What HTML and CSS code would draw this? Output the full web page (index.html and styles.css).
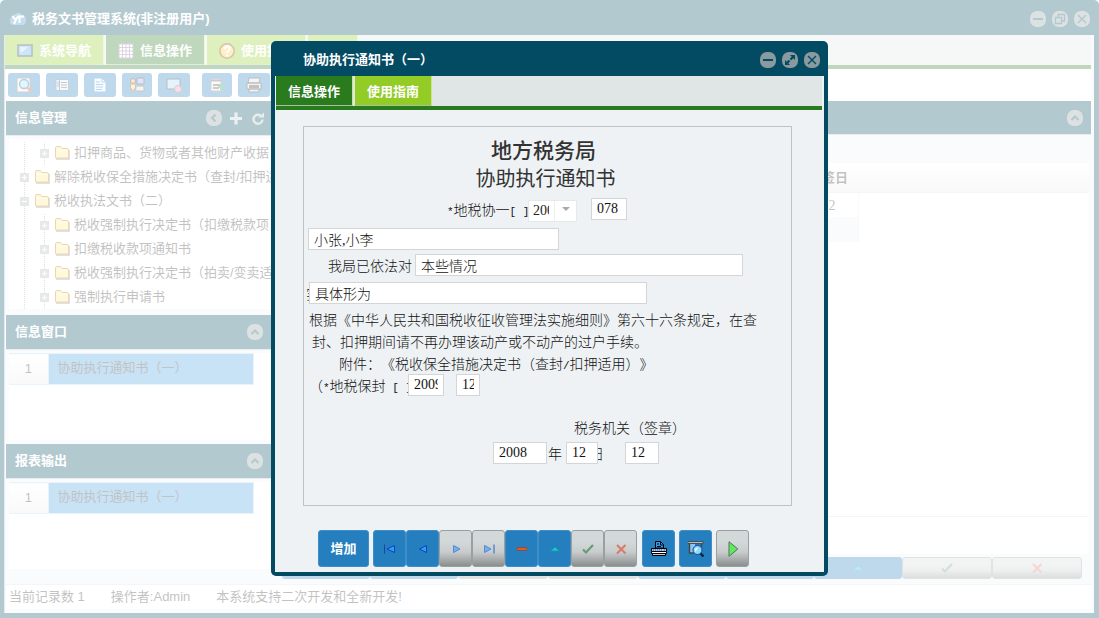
FILE: index.html
```html
<!DOCTYPE html>
<html lang="zh-CN">
<head>
<meta charset="utf-8">
<title>税务文书管理系统</title>
<link rel="stylesheet" href="styles.css">
</head>
<body>
<svg class="defs" aria-hidden="true">
  <symbol id="min" viewBox="0 0 16 16"><rect width="16" height="16" rx="7" fill="#8a9a9f"/><path d="M3 8h10" stroke="#034a63" stroke-width="2"/></symbol>
  <symbol id="restore" viewBox="0 0 16 16"><rect width="16" height="16" rx="7" fill="#8a9a9f"/><path d="M6 6V3.500h6.500V10H10M3.500 6.500H9.500V12.500H3.500z" fill="none" stroke="#034a63" stroke-width="1.300"/></symbol>
  <symbol id="max" viewBox="0 0 16 16"><rect width="16" height="16" rx="7" fill="#8a9a9f"/><path d="M8 3h5v5l-1.700-1.700-2 2-1.600-1.600 2-2zM8 13H3V8l1.700 1.700 2-2 1.600 1.600-2 2z" fill="#034a63"/></symbol>
  <symbol id="close" viewBox="0 0 16 16"><rect width="16" height="16" rx="7" fill="#8a9a9f"/><path d="M4 4l8 8M12 4l-8 8" stroke="#034a63" stroke-width="1.400"/></symbol>
  <symbol id="up" viewBox="0 0 16 16"><rect width="16" height="16" rx="7" fill="#8a9a9f"/><path d="M4.500 10L8 6.500 11.500 10" fill="none" stroke="#034a63" stroke-width="2"/></symbol>
  <symbol id="left" viewBox="0 0 16 16"><rect width="16" height="16" rx="7" fill="#8a9a9f"/><path d="M9.500 4.500L6 8l3.500 3.500" fill="none" stroke="#034a63" stroke-width="2"/></symbol>
  <symbol id="plus" viewBox="0 0 16 16"><path d="M8 2.500v12M2 8.500h12" stroke="#c3cbce" stroke-width="3.200"/></symbol>
  <symbol id="refresh" viewBox="0 0 16 16"><path d="M10.500 5.500A4.500 4.500 0 1 0 12.500 9.500" fill="none" stroke="#b6c0c3" stroke-width="2.400"/><path d="M8 7.500h6v-5z" fill="#b6c0c3"/></symbol>
  <symbol id="folder" viewBox="0 0 16 16"><path d="M2 14h13V5" fill="none" stroke="#777" stroke-width="1.500"/><path d="M1.500 13V3q0-1.500 1.500-1.500h3.500L8 3.500h5q1.500 0 1.500 1.500v8H2z" fill="#ffe680" stroke="#b87a10"/><path d="M2.500 5.500h11" stroke="#fff8d8"/></symbol>
  <symbol id="exp" viewBox="0 0 9 9"><rect width="9" height="9" fill="#acb5b7"/><path d="M2 4.500h5M4.500 2v5" stroke="#fff" stroke-width="1.200"/></symbol>
  <symbol id="col" viewBox="0 0 9 9"><rect width="9" height="9" fill="#acb5b7"/><path d="M2 4.500h5" stroke="#fff" stroke-width="1.200"/></symbol>
  <symbol id="first" viewBox="0 0 16 16"><path d="M2.500 3.500v9" stroke="#1545a8"/><path d="M12.500 4.500v7L5 8z" fill="#2e9dff" stroke="#0b46b5"/></symbol>
  <symbol id="prev" viewBox="0 0 16 16"><path d="M11.500 4.500v7L4.500 8z" fill="#2e9dff" stroke="#0b46b5"/></symbol>
  <symbol id="next" viewBox="0 0 16 16"><path d="M5.500 4.500v7L12 8z" fill="#71b1ef" stroke="#5689cf"/></symbol>
  <symbol id="last" viewBox="0 0 16 16"><path d="M3.500 4.500v7L10 8z" fill="#71b1ef" stroke="#5689cf"/><path d="M13 3.500v9" stroke="#5689cf" stroke-width="1.500"/></symbol>
  <symbol id="add" viewBox="0 0 16 16"><path d="M8 3v10M3 8h10" stroke="#15b84a" stroke-width="2.500"/></symbol>
  <symbol id="minus" viewBox="0 0 16 16"><rect x="3" y="6.500" width="10" height="3" fill="#c9260b"/><path d="M3.500 8h9" stroke="#ff941f"/></symbol>
  <symbol id="tri" viewBox="0 0 16 16"><path d="M3.500 10L8 6l4.500 4z" fill="#11d1de" stroke="#1495aa"/></symbol>
  <symbol id="check" viewBox="0 0 16 16"><path d="M3 8.500l3 3 7-7.500" fill="none" stroke="#659c78" stroke-width="2.200"/></symbol>
  <symbol id="cross" viewBox="0 0 16 16"><path d="M4 4l8.500 8.500M12.500 4L4 12.500" stroke="#d9796c" stroke-width="2"/></symbol>
</svg>

<div class="app">
  <header class="titlebar">
    <svg class="logo" viewBox="0 0 16 16"><path d="M3 14A4 4 0 0 1 1 7Q3 3 6 3q3-3 6 1 4 0 4 5 0 5-4 5z" fill="#3f8fc4"/><path d="M2.500 5l3 4 3-4M6 8.500L4 13M9.500 12V5.500H14" stroke="#fff" stroke-width="2" fill="none"/></svg>
    <h1>税务文书管理系统(非注册用户)</h1>
    <div class="winctl">
      <button aria-label="最小化"><svg><use href="#min"/></svg></button>
      <button aria-label="还原"><svg><use href="#restore"/></svg></button>
      <button aria-label="关闭"><svg><use href="#close"/></svg></button>
    </div>
  </header>
  <div class="client">
    <nav class="tabs main-tabs">
      <button><svg viewBox="0 0 16 16"><rect x="1" y="2" width="14" height="11" fill="#55a8e4" stroke="#10202f" stroke-width="1.400"/><path d="M3 4h8L4 10z" fill="#b9dfff"/></svg>系统导航</button>
      <button class="on"><svg viewBox="0 0 16 16"><rect x="1" y="1" width="14" height="14" fill="#fff"/><path d="M1 1h14v14H1zM4.500 1v14M8 1v14M11.500 1v14M1 4.500h14M1 8h14M1 11.500h14" fill="none" stroke="#8b6f9e"/></svg>信息操作</button>
      <button><svg viewBox="0 0 16 16"><circle cx="8" cy="8" r="7.200" fill="#ffc83a" stroke="#7d3000" stroke-width="1.500"/><path d="M5.500 6.500q0-3 2.700-3t2.500 2.300Q10.500 7.500 8 9v1M8 11.500v1.500" fill="none" stroke="#fff" stroke-width="2"/></svg>使用指南</button>
      <button class="stub" aria-label="更多"></button>
    </nav>
    <div class="toolbar">
      <button aria-label="查找"><svg viewBox="0 0 16 16"><path d="M1 1h13v14H1z" fill="#eee" stroke="#666"/><circle cx="8" cy="7" r="4.500" fill="#9be0ff" stroke="#1b5880" stroke-width="1.300"/><path d="M11 10l4 5" stroke="#d64a10" stroke-width="2.500"/></svg></button>
      <button aria-label="列表"><svg viewBox="0 0 16 16"><path d="M2 2.500h12.500v11H2z" fill="#dceaf3" stroke="#4f6676"/><path d="M5.500 3v10M7 5.500h6M7 8h6M7 10.500h6M3 5h2M3 7h2M3 9h2" stroke="#3a5a70"/></svg></button>
      <button aria-label="文档"><svg viewBox="0 0 16 16"><path d="M2 1h8l4 4v10H2z" fill="#e2f5ff" stroke="#1f7cc0"/><path d="M10 1v4h4M4 5h4M4 7.500h7M4 10h7M4 12.500h6" fill="none" stroke="#1f7cc0"/></svg></button>
      <button class="narrow" aria-label="用户"><svg viewBox="0 0 16 16"><path d="M8 1h7v6H8z" fill="#9aa0ff" stroke="#222"/><path d="M8 9h7v5H7" fill="#ddd" stroke="#444"/><circle cx="4" cy="4" r="2.500" fill="#f5b264" stroke="#3a2010"/><path d="M1.500 7h5v5H5v3H3v-3H1.500z" fill="#ffd178" stroke="#6d430b"/></svg></button>
      <button aria-label="屏幕"><svg viewBox="0 0 16 16"><path d="M1 2h13v10H1z" fill="#a5d5f5" stroke="#142a3a"/><circle cx="12" cy="12" r="3.500" fill="#e890de" stroke="#9b6010"/></svg></button>
      <button class="narrow apart" aria-label="新增记录"><svg viewBox="0 0 16 16"><path d="M2 2h10v12H2z" fill="#eee" stroke="#777"/><path d="M2 3.500h10M4 8h7M4 11h6" stroke="#555" stroke-width="2"/><path d="M12 7v6M9 10h6" stroke="#1da63c" stroke-width="2"/></svg></button>
      <button aria-label="打印"><svg viewBox="0 0 16 16"><path d="M3 1h11l-1 5H2zM1 6h14v6H1zM3 12h10v3H3z" fill="#ddd" stroke="#222"/><path d="M3 8h10v3H3z" fill="#333"/></svg></button>
    </div>
    <div class="workspace">
      <aside class="side">
        <section class="tree-panel">
          <header class="bar"><h2>信息管理</h2>
            <button aria-label="收起"><svg><use href="#left"/></svg></button>
            <button aria-label="添加"><svg><use href="#plus"/></svg></button>
            <button aria-label="刷新"><svg><use href="#refresh"/></svg></button>
          </header>
          <div class="pane">
            <ul class="tree">
              <li class="sub"><svg class="exp"><use href="#exp"/></svg><svg class="fold"><use href="#folder"/></svg>扣押商品、货物或者其他财产收据</li>
              <li><svg class="exp"><use href="#exp"/></svg><svg class="fold"><use href="#folder"/></svg>解除税收保全措施决定书（查封/扣押适用）</li>
              <li><svg class="exp"><use href="#col"/></svg><svg class="fold"><use href="#folder"/></svg>税收执法文书（二）</li>
              <li class="sub"><svg class="exp"><use href="#exp"/></svg><svg class="fold"><use href="#folder"/></svg>税收强制执行决定书（扣缴税款项</li>
              <li class="sub"><svg class="exp"><use href="#exp"/></svg><svg class="fold"><use href="#folder"/></svg>扣缴税收款项通知书</li>
              <li class="sub"><svg class="exp"><use href="#exp"/></svg><svg class="fold"><use href="#folder"/></svg>税收强制执行决定书（拍卖/变卖适</li>
              <li class="sub"><svg class="exp"><use href="#exp"/></svg><svg class="fold"><use href="#folder"/></svg>强制执行申请书</li>
            </ul>
          </div>
        </section>
        <section class="list-panel">
          <header class="bar"><h2>信息窗口</h2><button aria-label="折叠"><svg><use href="#up"/></svg></button></header>
          <div class="pane"><div class="sheet"><table class="list"><tr><th>1</th><td>协助执行通知书（一）</td></tr></table></div></div>
        </section>
        <section class="list-panel">
          <header class="bar"><h2>报表输出</h2><button aria-label="折叠"><svg><use href="#up"/></svg></button></header>
          <div class="pane"><div class="sheet"><table class="list"><tr><th>1</th><td>协助执行通知书（一）</td></tr></table></div></div>
        </section>
      </aside>
      <main class="content">
        <header class="bar"><h2></h2><button aria-label="折叠"><svg><use href="#up"/></svg></button></header>
        <div class="grid-wrap">
          <table class="grid">
            <thead><tr><th>签日</th><th></th></tr></thead>
            <tbody><tr><td>12</td><td></td></tr><tr class="alt"><td></td><td></td></tr></tbody>
          </table>
          <div class="grid-foot"></div>
        </div>
        <div class="pager">
          <button aria-label="首条"><svg><use href="#first"/></svg></button>
          <button aria-label="上一条"><svg><use href="#prev"/></svg></button>
          <button class="off" aria-label="下一条"><svg><use href="#next"/></svg></button>
          <button class="off" aria-label="末条"><svg><use href="#last"/></svg></button>
          <button aria-label="添加"><svg><use href="#add"/></svg></button>
          <button aria-label="删除"><svg><use href="#minus"/></svg></button>
          <button aria-label="编辑"><svg><use href="#tri"/></svg></button>
          <button class="off" aria-label="保存"><svg><use href="#check"/></svg></button>
          <button class="off" aria-label="取消"><svg><use href="#cross"/></svg></button>
        </div>
      </main>
    </div>
    <footer class="status"><span>当前记录数 1</span><span>操作者:Admin</span><span>本系统支持二次开发和全新开发!</span></footer>
  </div>
</div>

<div class="veil"></div>

<section class="dialog" role="dialog" aria-labelledby="dlg-title">
  <header class="dlg-head">
    <h2 id="dlg-title">协助执行通知书（一）</h2>
    <div class="winctl">
      <button aria-label="最小化"><svg><use href="#min"/></svg></button>
      <button aria-label="最大化"><svg><use href="#max"/></svg></button>
      <button aria-label="关闭"><svg><use href="#close"/></svg></button>
    </div>
  </header>
  <div class="dlg-body">
    <nav class="tabs dlg-tabs"><button class="on">信息操作</button><button>使用指南</button></nav>
    <form class="doc">
      <h3>地方税务局</h3>
      <h4>协助执行通知书</h4>
      <div class="row number">
        <label class="cut" for="year"><i>*</i>地税协一<i>[&nbsp;]</i></label>
        <span class="combo"><select id="year"><option>2008</option></select></span>
        <input class="w36" aria-label="编号" value="078">
      </div>
      <div class="row who"><input aria-label="收件人" value="小张,小李"></div>
      <div class="row case"><label for="case">我局已依法对</label><input id="case" value="本些情况"></div>
      <div class="row act"><label class="cut" for="act">实</label><input id="act" value="具体形为"></div>
      <div class="law">
        <p>根据《中华人民共和国税收征收管理法实施细则》第六十六条规定，在查</p>
        <p class="l2">封、扣押期间请不再办理该动产或不动产的过户手续。</p>
        <p class="l3">附件：《税收保全措施决定书（查封<i>/</i>扣押适用）》</p>
      </div>
      <div class="row seal-no"><label class="cut" for="sy">（<i>*</i>地税保封<i>&nbsp;[&nbsp;]</i></label><input id="sy" class="w36" value="2009"><input class="w24" aria-label="保封编号" value="12"></div>
      <p class="sign">税务机关（签章）</p>
      <div class="row date"><input id="dy" class="w54" value="2008"><label for="dy">年</label><input id="dm" class="w32" value="12"><label class="cut" for="dm">日</label><input class="w34" aria-label="日期" value="12"></div>
    </form>
    <div class="actions">
      <button class="text">增加</button>
      <div class="group">
        <button aria-label="首条"><svg><use href="#first"/></svg></button><button aria-label="上一条"><svg><use href="#prev"/></svg></button><button class="off" aria-label="下一条"><svg><use href="#next"/></svg></button><button class="off" aria-label="末条"><svg><use href="#last"/></svg></button><button aria-label="删除"><svg><use href="#minus"/></svg></button><button aria-label="编辑"><svg><use href="#tri"/></svg></button><button class="off" aria-label="保存"><svg><use href="#check"/></svg></button><button class="off" aria-label="取消"><svg><use href="#cross"/></svg></button>
      </div>
      <button aria-label="打印"><svg viewBox="0 0 16 16"><path d="M4.500 7V.500h5l3 3V7z" fill="#3b9be8" stroke="#000"/><path d="M9.500 1v3h3M6 3h2M6 5.500h4" fill="none" stroke="#000"/><path d="M.500 7.500h15v3H.500z" fill="#9bc8f0" stroke="#000"/><path d="M2 9h10" stroke="#2f5fb5" stroke-dasharray="1 1"/><path d="M13 9h1" stroke="#e22"/><path d="M.500 10.500h15v2H.500z" fill="#fff" stroke="#000"/><path d="M1.500 12.500h13v2h-13z" fill="#ccc" stroke="#000"/></svg></button>
      <button aria-label="预览"><svg viewBox="0 0 16 16"><path d="M0 .500h15v2H0z" fill="#bbb" stroke="#333" stroke-width=".700"/><path d="M2 3v9h5V3z" fill="#8cc6f2"/><path d="M1.500 3v9H6M13.500 3v3" fill="none" stroke="#444" stroke-width="1.400"/><circle cx="9.500" cy="9" r="4.500" fill="#8fd8ff" stroke="#114c86"/><path d="M7 9q0-2.500 3-2.500L7.500 11z" fill="#fff"/><path d="M12.500 12.500l3 3" stroke="#08243f" stroke-width="2.400"/></svg></button>
      <button class="off" aria-label="运行"><svg viewBox="0 0 16 16"><path d="M4 .700v14.600L12.800 8z" fill="#5eea5e" stroke="#56705a"/></svg></button>
    </div>
  </div>
</section>
</body>
</html>
```
FILE: styles.css
```css
* { box-sizing: border-box; }
body {
  margin: 0;
  font: 13px/20px "Liberation Sans", "Noto Sans CJK SC", sans-serif;
  color: #333;
  background: #fff;
  text-spacing-trim: space-all;
  position: relative;
  overflow: hidden;
}
h1, h2, h3, h4, p, ul { margin: 0; padding: 0; font-size: 13px; }
button { border: 0; padding: 0; background: none; font: inherit; display: flex; align-items: center; justify-content: center; }
svg { display: block; width: 16px; height: 16px; flex: none; }
.defs { position: absolute; width: 0; height: 0; }
.winctl { display: flex; gap: 6px; margin-left: auto; }

/* main window */
.app { min-height: 100vh; display: flex; flex-direction: column; background: #034a63; border-radius: 5px 5px 0 0; padding: 0 5px 5px 4px; }
.titlebar { height: 35px; display: flex; align-items: center; color: #fff; padding: 2px 4px 0 6px; }
.titlebar h1 { margin-left: 6px; }
.client { flex: 1; display: flex; flex-direction: column; background: #eef2f4; padding: 0 3px 4px 1px; border-left: 1px solid #a8bdc5; }
.tabs { display: flex; background: #e0e5e5; border-bottom: 4px solid #2a7a1e; gap: 2px; }
.tabs button { height: 30px; padding-top: 2px; background: #92cc25; color: #fff; font-weight: bold; border-right: 1px solid #c9e58e; border-bottom: 1px solid #a5c2a0; }
.tabs .on { background: #2a7a1e; }
.main-tabs { margin-left: -1px; }
.main-tabs button { width: 99px; gap: 6px; }
.main-tabs .stub { width: 50px; }
.toolbar { display: flex; gap: 6px; height: 32px; background: #fff; align-items: center; padding: 0 2px; }
.toolbar button { width: 32px; height: 24px; border-radius: 3px; background: #257fbf; }
.toolbar .narrow { width: 30px; }
.toolbar .apart { margin-left: 6px; }
.workspace { flex: 1; display: flex; gap: 3px; }
.side { width: 268px; display: flex; flex-direction: column; }
.side section { display: flex; flex-direction: column; }
.bar { height: 35px; display: flex; align-items: center; gap: 6px; background: #034a63; color: #fff; padding: 0 8px 0 9px; border-bottom: 1px solid #b5c4c8; }
.bar h2 { margin-right: auto; }
.side .bar { padding-right: 11px; }
.tree-panel .bar { padding-right: 8px; }
.pane { padding: 3px 3px 4px; }
.tree-panel .pane { padding-bottom: 6px; }
.tree { background: #fff; list-style: none; overflow: hidden; padding: 2px 0 0 6px; }
.tree li { display: flex; align-items: center; height: 24px; white-space: nowrap; gap: 4px; padding-left: 5px; background: repeating-linear-gradient(#fff 0 1px, #999 1px 2px) 9px 0 / 1px 100% no-repeat; }
.tree .sub { padding-left: 25px; background: repeating-linear-gradient(#fff 0 1px, #999 1px 2px) 9px 0 / 1px 100% no-repeat, repeating-linear-gradient(#fff 0 1px, #999 1px 2px) 29px 0 / 1px 100% no-repeat; }
.exp { width: 9px; height: 9px; margin-right: 1px; }
.list-panel { height: 129px; }
.list-panel .pane { flex: 1; }
.list-panel .sheet { height: 100%; background: #fff; }
.list { width: 245px; border-collapse: collapse; }
.list th, .list td { height: 31px; padding: 0; border: 1px solid #b5d8f2; border-left: 0; }
.list th { width: 39px; font-weight: normal; background: linear-gradient(#fff, #eaeaea); }
.list td { background: #479fdf; padding-left: 9px; padding-bottom: 3px; }
.content { flex: 1; display: flex; flex-direction: column; }
.content .bar { height: 34px; }
.grid-wrap { flex: 1; margin: 28px 2px 0 4px; background: #fff; display: flex; flex-direction: column; }
.grid { width: 100%; border-collapse: collapse; }
.grid th { height: 29px; padding: 2px 10px 0 0; text-align: right; background: linear-gradient(#fff, #e8e8e8); border-bottom: 1px solid #ddd; }
.grid th:first-child { width: 577px; }
.grid td { height: 25px; padding: 2px 22px 0 0; text-align: right; font-family: "Liberation Serif", serif; font-size: 14px; }
.grid td:first-child { border-right: 1px solid #eee; }
.grid .alt td:first-child { background: #eef2f4; }
.grid-foot { margin-top: auto; height: 38px; border-top: 1px solid #ddd; }
.pager { display: flex; padding: 3px 9px 5px 5px; }
.pager button { flex: 1; height: 22px; border-radius: 3px; background: #257fbf; }
.status { height: 25px; background: #fff; border-top: 1px solid #ddd; display: flex; align-items: center; gap: 26px; padding-left: 3px; }
.pager .off, .actions .off { background: linear-gradient(#d3d8d8 30%, #c8cccc 60%, #8b8e8e); border: 1px solid #9aa0a0; }
.veil { position: absolute; inset: 0; background: rgba(255, 255, 255, .7); }

/* dialog window */
.dialog { position: absolute; left: 271px; top: 41px; width: 557px; background: #034a63; border-radius: 5px; padding: 0 4px 4px; }
.dlg-head { height: 35px; display: flex; align-items: center; color: #fff; padding: 2px 4px 0 28px; }
.dlg-body { background: #eef2f4; padding: 0 2px 5px 1px; }
.dlg-tabs button { width: 77px; }
.doc { margin: 16px 30px 0 27px; border: 1px solid #bbc3c4; padding: 8px 0 41px; font: 300 14px/22px "Noto Sans CJK SC", sans-serif; color: #111; }
.doc h3 { font-size: 21px; line-height: 28px; font-weight: 500; color: #333; text-align: center; padding-right: 8px; }
.doc h4 { font-size: 20px; line-height: 30px; font-weight: 400; color: #333; text-align: center; padding-right: 4px; }
.doc p { font-size: 14px; white-space: nowrap; }
.doc i { font: 11px/11px "Liberation Mono", monospace; }
.row { display: flex; height: 22px; white-space: nowrap; }
.row input { height: 22px; border: 1px solid #d2d6d7; background: #fff; padding: 0 5px; font: 300 14px "Liberation Serif", "Noto Sans CJK SC", serif; color: #111; min-width: 0; border-radius: 0; }
.cut { overflow: hidden; flex: none; }
.row .w24 { width: 24px; }
.row .w32 { width: 32px; }
.row .w34 { width: 34px; }
.row .w36 { width: 36px; }
.row .w54 { width: 54px; }
.number { margin-top: 5px; padding-left: 143px; }
.number .cut { width: 81px; }
.combo { position: relative; width: 49px; margin-right: 14px; }
.combo select { appearance: none; width: 49px; height: 22px; border: 1px solid #e6e9ea; border-radius: 0; padding: 0 27px 0 4px; background: linear-gradient(90deg, #fff 25px, #eee 25px 26px, #fff 26px); font: 14px "Liberation Serif", serif; color: #222; overflow: hidden; }
.combo::after { content: ""; position: absolute; right: 7px; top: 9px; border: 4px solid transparent; border-top-color: #aaa; border-bottom: 0; }
.who { margin-top: 8px; padding-left: 4px; }
.who input { width: 251px; }
.case { margin-top: 4px; padding-left: 24px; gap: 3px; }
.case input { width: 328px; }
.act { margin-top: 6px; padding-left: 2px; }
.act .cut { width: 3px; }
.act input { width: 338px; }
.law { margin-top: 4px; padding-left: 5px; }
.law .l2 { padding-left: 3px; }
.law .l3 { padding-left: 30px; }
.seal-no { padding-left: 5px; }
.seal-no .cut { width: 99px; }
.seal-no .w24 { margin-left: 12px; }
.doc .sign { margin-top: 20px; padding-left: 270px; }
.date { margin-top: 4px; padding-left: 189px; }
.date label { margin: 0 4px 0 1px; }
.date .cut { width: 6px; display: flex; justify-content: flex-end; margin: 0 21px 0 0; }
.actions { display: flex; gap: 4px; margin-top: 24px; padding-left: 42px; }
.actions .group { display: flex; margin-right: 1px; }
.actions button { width: 33px; height: 37px; border-radius: 3px; background: #257fbf; border: 1px solid #3f8ec8; }
.actions .text { width: 51px; color: #fff; font-weight: bold; }
```
